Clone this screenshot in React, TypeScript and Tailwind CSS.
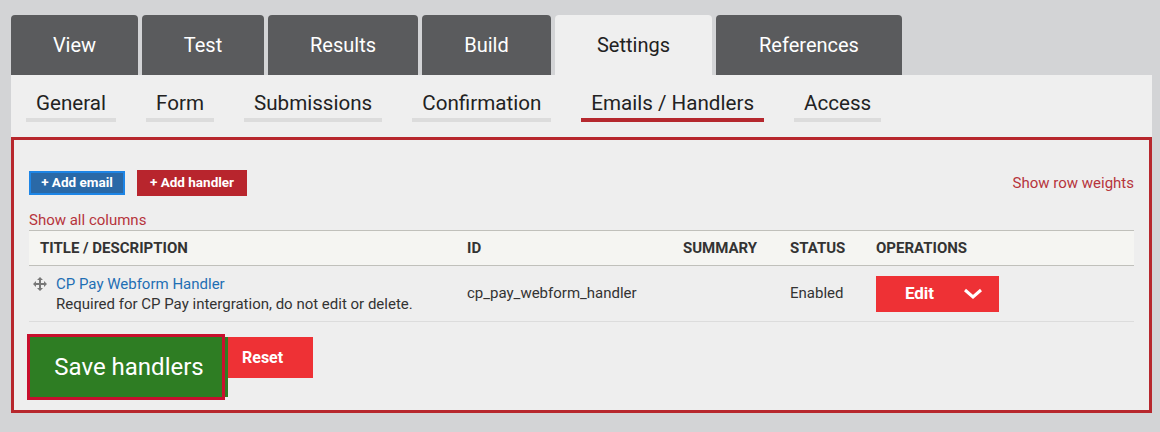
import React from 'react';

const mainTabs = [
  { label: 'View', w: 'w-[127px]' },
  { label: 'Test', w: 'w-[122px]' },
  { label: 'Results', w: 'w-[150px]' },
  { label: 'Build', w: 'w-[129px]' },
  { label: 'Settings', w: 'w-[157px]', active: true },
  { label: 'References', w: 'w-[186px]' },
];

const subTabs = ['General', 'Form', 'Submissions', 'Confirmation', 'Emails / Handlers', 'Access'];

function DragIcon() {
  return (
    <svg width="14" height="14" viewBox="0 0 14 14" className="shrink-0">
      <path d="M7 2v10M2 7h10" stroke="#777" strokeWidth="2" />
      <path d="M7 0l3 3H4zM7 14l3-3H4zM0 7l3-3v6zM14 7l-3-3v6z" fill="#777" />
    </svg>
  );
}

export default function App() {
  return (
    <div className="w-[1160px] h-[432px] bg-[#d3d4d6] pt-[15px] pl-[11px] font-['Roboto',sans-serif]">
      <div className="flex gap-[4px] h-[60px]">
        {mainTabs.map(t => (
          <div
            key={t.label}
            className={`${t.w} rounded-t-[4px] flex items-center justify-center text-[20px] ${t.active ? 'bg-[#efefef] text-[#222]' : 'bg-[#5a5b5d] text-white'}`}
          >
            {t.label}
          </div>
        ))}
      </div>

      <div className="w-[1141px] bg-[#efefef]">
        <div className="flex gap-[30px] pl-[15px] pb-[15px]">
          {subTabs.map(s => (
            <div
              key={s}
              className={`pt-[16px] pb-[3px] px-[10px] leading-[24px] text-[20.6px] text-[#222] border-b-4 ${s === 'Emails / Handlers' ? 'border-[#b5282e]' : 'border-[#dcdcdc]'}`}
            >
              {s}
            </div>
          ))}
        </div>

        <div className="border-[3px] border-[#b7272d] bg-[#eeeeee] h-[276px] px-[15px] pt-[30px]">
          <div className="flex items-center justify-between">
            <div className="flex items-center gap-[12px]">
              <button className="w-[96px] h-[24px] bg-[#2a69a7] border-2 border-[#1d85e6] text-white text-[13.5px] font-bold leading-none">
                + Add email
              </button>
              <button className="w-[110px] h-[26px] bg-[#b8252d] text-white text-[13.5px] font-bold leading-none">
                + Add handler
              </button>
            </div>
            <span className="text-[15px] text-[#b6343c]">Show row weights</span>
          </div>

          <div className="mt-[15px] text-[15px] leading-[18px] text-[#b6343c]">Show all columns</div>

          <div className="mt-[1px]">
            <div className="grid grid-cols-[427px_216px_107px_86px_1fr] h-[36px] items-center bg-[#f5f5f2] border-y border-[#c0c0bb] text-[15px] font-bold text-[#333] uppercase">
              <div className="pl-[11px]">Title / Description</div>
              <div className="pl-[11px]">ID</div>
              <div className="pl-[11px]">Summary</div>
              <div className="pl-[11px]">Status</div>
              <div className="pl-[11px]">Operations</div>
            </div>
            <div className="grid grid-cols-[427px_216px_107px_86px_1fr] h-[56px] items-center border-b border-[#dcdcdc] text-[15px] text-[#333]">
              <div className="flex items-start gap-[9px] pl-[4px] pt-[1px]">
                <div className="pt-[3px]"><DragIcon /></div>
                <div className="leading-[20px]">
                  <div className="text-[#1f6fb4]">CP Pay Webform Handler</div>
                  <div>Required for CP Pay intergration, do not edit or delete.</div>
                </div>
              </div>
              <div className="pl-[11px]">cp_pay_webform_handler</div>
              <div />
              <div className="pl-[11px]">Enabled</div>
              <div className="pl-[11px] pt-[1px]">
                <div className="w-[123px] h-[36px] bg-[#ee3135] flex items-center text-white">
                  <span className="w-[87px] text-center text-[17px] font-bold">Edit</span>
                  <svg width="20" height="12" viewBox="0 0 20 12">
                    <path d="M2 2l8 7 8-7" stroke="white" strokeWidth="3" fill="none" />
                  </svg>
                </div>
              </div>
            </div>
          </div>

          <div className="flex items-start mt-[15px] pl-[1px]">
            <div className="relative">
              <button className="w-[198px] h-[60px] bg-[#2e7d23] text-white text-[24px] leading-none">
                Save handlers
              </button>
              <span className="absolute -top-[3px] -left-[3px] right-[3px] -bottom-[3px] border-[3px] border-[#c8102e] pointer-events-none" />
            </div>
            <button className="w-[85px] h-[41px] bg-[#ee3135] text-white text-[16px] font-bold text-left pl-[14px]">
              Reset
            </button>
          </div>
        </div>
      </div>
    </div>
  );
}
